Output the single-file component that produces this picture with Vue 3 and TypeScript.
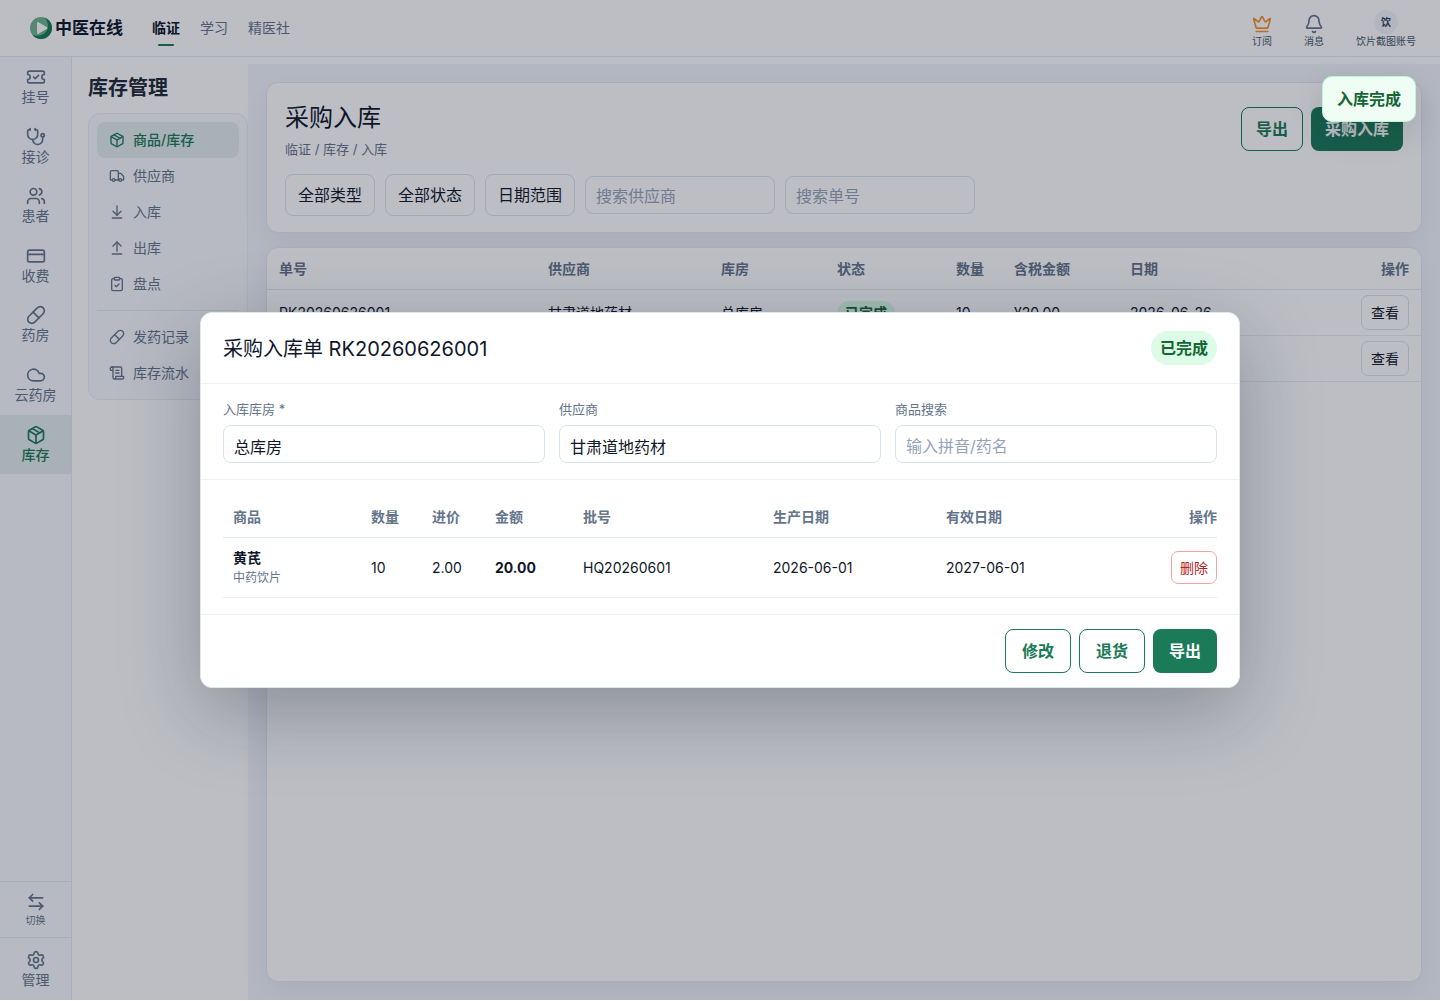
<script setup lang="ts">
import { ref } from 'vue'

type IconName = keyof typeof icons

const icons = {
  ticket: '<path d="M2 9a3 3 0 0 1 0 6v2a2 2 0 0 0 2 2h16a2 2 0 0 0 2-2v-2a3 3 0 0 1 0-6V7a2 2 0 0 0-2-2H4a2 2 0 0 0-2 2Z"/><path d="m9 12 2 2 4-4"/>',
  stethoscope: '<path d="M11 2v2"/><path d="M5 2v2"/><path d="M5 3H4a2 2 0 0 0-2 2v4a6 6 0 0 0 12 0V5a2 2 0 0 0-2-2h-1"/><path d="M8 15a6 6 0 0 0 12 0v-3"/><circle cx="20" cy="10" r="2"/>',
  users: '<path d="M16 21v-2a4 4 0 0 0-4-4H6a4 4 0 0 0-4 4v2"/><path d="M16 3.128a4 4 0 0 1 0 7.744"/><path d="M22 21v-2a4 4 0 0 0-3-3.87"/><circle cx="9" cy="7" r="4"/>',
  card: '<rect width="20" height="14" x="2" y="5" rx="2"/><path d="M2 10h20"/>',
  pill: '<path d="m10.5 20.5 10-10a4.95 4.95 0 1 0-7-7l-10 10a4.95 4.95 0 1 0 7 7Z"/><path d="m8.5 8.5 7 7"/>',
  cloud: '<path d="M17.5 19H9a7 7 0 1 1 6.71-9h1.79a4.5 4.5 0 1 1 0 9Z"/>',
  box: '<path d="M11 21.73a2 2 0 0 0 2 0l7-4A2 2 0 0 0 21 16V8a2 2 0 0 0-1-1.73l-7-4a2 2 0 0 0-2 0l-7 4A2 2 0 0 0 3 8v8a2 2 0 0 0 1 1.73z"/><path d="M12 22V12"/><path d="M3.29 7 12 12l8.71-5"/><path d="m7.5 4.27 9 5.15"/>',
  truck: '<path d="M14 18V6a2 2 0 0 0-2-2H4a2 2 0 0 0-2 2v11a1 1 0 0 0 1 1h2"/><path d="M15 18H9"/><path d="M19 18h2a1 1 0 0 0 1-1v-3.65a1 1 0 0 0-.22-.624l-3.48-4.35A1 1 0 0 0 17.52 8H14"/><circle cx="17" cy="18" r="2"/><circle cx="7" cy="18" r="2"/>',
  down: '<path d="M12 17V3"/><path d="m6 11 6 6 6-6"/><path d="M19 21H5"/>',
  up: '<path d="m18 9-6-6-6 6"/><path d="M12 3v14"/><path d="M5 21h14"/>',
  clipboard: '<rect width="8" height="4" x="8" y="2" rx="1"/><path d="M16 4h2a2 2 0 0 1 2 2v14a2 2 0 0 1-2 2H6a2 2 0 0 1-2-2V6a2 2 0 0 1 2-2h2"/><path d="m9 14 2 2 4-4"/>',
  scroll: '<path d="M15 12h-5"/><path d="M15 8h-5"/><path d="M19 17V5a2 2 0 0 0-2-2H4"/><path d="M8 21h12a2 2 0 0 0 2-2v-1a1 1 0 0 0-1-1H11a1 1 0 0 0-1 1v1a2 2 0 1 1-4 0V5a2 2 0 1 0-4 0v2a1 1 0 0 0 1 1h3"/>',
  swap: '<path d="M8 3 4 7l4 4"/><path d="M4 7h16"/><path d="m16 21 4-4-4-4"/><path d="M20 17H4"/>',
  gear: '<path d="M9.671 4.136a2.34 2.34 0 0 1 4.659 0 2.34 2.34 0 0 0 3.319 1.915 2.34 2.34 0 0 1 2.33 4.033 2.34 2.34 0 0 0 0 3.831 2.34 2.34 0 0 1-2.33 4.033 2.34 2.34 0 0 0-3.319 1.915 2.34 2.34 0 0 1-4.659 0 2.34 2.34 0 0 0-3.32-1.915 2.34 2.34 0 0 1-2.33-4.033 2.34 2.34 0 0 0 0-3.831A2.34 2.34 0 0 1 6.35 6.051a2.34 2.34 0 0 0 3.319-1.915"/><circle cx="12" cy="12" r="3"/>',
  crown: '<path d="M11.562 3.266a.5.5 0 0 1 .876 0L15.39 8.87a1 1 0 0 0 1.516.294L21.183 5.5a.5.5 0 0 1 .798.519l-2.834 10.246a1 1 0 0 1-.956.734H5.81a1 1 0 0 1-.957-.734L2.02 6.02a.5.5 0 0 1 .798-.519l4.276 3.664a1 1 0 0 0 1.516-.294z"/><path d="M5 21h14"/>',
  bell: '<path d="M10.268 21a2 2 0 0 0 3.464 0"/><path d="M3.262 15.326A1 1 0 0 0 4 17h16a1 1 0 0 0 .74-1.673C19.41 13.956 18 12.499 18 8A6 6 0 0 0 6 8c0 4.499-1.411 5.956-2.738 7.326"/>',
}

const topNav = ['临证', '学习', '精医社']

const railItems: { label: string; icon: IconName }[] = [
  { label: '挂号', icon: 'ticket' },
  { label: '接诊', icon: 'stethoscope' },
  { label: '患者', icon: 'users' },
  { label: '收费', icon: 'card' },
  { label: '药房', icon: 'pill' },
  { label: '云药房', icon: 'cloud' },
  { label: '库存', icon: 'box' },
]

const stockMenu: { label: string; icon: IconName }[] = [
  { label: '商品/库存', icon: 'box' },
  { label: '供应商', icon: 'truck' },
  { label: '入库', icon: 'down' },
  { label: '出库', icon: 'up' },
  { label: '盘点', icon: 'clipboard' },
]

const logMenu: { label: string; icon: IconName }[] = [
  { label: '发药记录', icon: 'pill' },
  { label: '库存流水', icon: 'scroll' },
]

const filters = ['全部类型', '全部状态', '日期范围']

interface Receipt {
  no?: string
  supplier?: string
  store?: string
  status?: string
  count?: number
  amount?: string
  date?: string
}

const receipts: Receipt[] = [
  { no: 'RK20260626001', supplier: '甘肃道地药材', store: '总库房', status: '已完成', count: 10, amount: '¥20.00', date: '2026-06-26' },
  {},
]

const supplierQuery = ref('')
const receiptQuery = ref('')
const store = ref('总库房')
const supplier = ref('甘肃道地药材')
const productQuery = ref('')
</script>

<template>
  <div class="app">
    <header class="topbar">
      <a class="brand" href="#">
        <svg class="logo" viewBox="0 0 22 22" aria-hidden="true">
          <circle cx="11" cy="11" r="11" fill="#6fb58c" />
          <path d="M15 .8A11 11 0 1 1 2.500 18C8 20 14 18 16.500 14 19 10 18 4.500 15 .8Z" fill="#1b7a57" />
          <path d="M7 6v10a1 1 0 0 0 1.500.8l8.500-5a1 1 0 0 0 0-1.600l-8.500-5A1 1 0 0 0 7 6Z" fill="#fff" />
        </svg>
        <span class="brand-name">中医在线</span>
      </a>
      <nav class="top-nav">
        <a v-for="(item, i) in topNav" :key="item" href="#" :class="{ current: i === 0 }">{{ item }}</a>
      </nav>
      <div class="tools">
        <button type="button" class="tool">
          <svg class="icon crown" viewBox="0 0 24 24" v-html="icons.crown" />
          <span>订阅</span>
        </button>
        <button type="button" class="tool">
          <svg class="icon" viewBox="0 0 24 24" v-html="icons.bell" />
          <span>消息</span>
        </button>
        <button type="button" class="tool">
          <span class="avatar">饮</span>
          <span>饮片截图账号</span>
        </button>
      </div>
    </header>

    <div class="body">
      <aside class="rail">
        <nav>
          <a v-for="item in railItems" :key="item.label" href="#" class="rail-item" :class="{ current: item.label === '库存' }">
            <svg class="icon" viewBox="0 0 24 24" v-html="icons[item.icon]" />
            <span>{{ item.label }}</span>
          </a>
        </nav>
        <div class="rail-foot">
          <button type="button" class="rail-switch">
            <svg class="icon" viewBox="0 0 24 24" v-html="icons.swap" />
            <span>切换</span>
          </button>
          <div class="rail-manage">
            <a href="#" class="rail-item">
              <svg class="icon" viewBox="0 0 24 24" v-html="icons.gear" />
              <span>管理</span>
            </a>
          </div>
        </div>
      </aside>

      <aside class="submenu">
        <h2>库存管理</h2>
        <nav class="menu-box">
          <a v-for="(item, i) in stockMenu" :key="item.label" href="#" class="menu-item" :class="{ current: i === 0 }">
            <svg class="icon small" viewBox="0 0 24 24" v-html="icons[item.icon]" />
            <span>{{ item.label }}</span>
          </a>
          <hr />
          <a v-for="item in logMenu" :key="item.label" href="#" class="menu-item">
            <svg class="icon small" viewBox="0 0 24 24" v-html="icons[item.icon]" />
            <span>{{ item.label }}</span>
          </a>
        </nav>
      </aside>

      <main class="content">
        <section class="card page-head">
          <div class="head-row">
            <div>
              <h1>采购入库</h1>
              <p class="crumbs">临证 / 库存 / 入库</p>
            </div>
            <div class="actions">
              <button type="button" class="btn compact outline">导出</button>
              <button type="button" class="btn compact primary">采购入库</button>
            </div>
          </div>
          <div class="filters">
            <button v-for="f in filters" :key="f" type="button" class="filter">{{ f }}</button>
            <input v-model="supplierQuery" class="field" type="text" placeholder="搜索供应商" aria-label="搜索供应商" />
            <input v-model="receiptQuery" class="field" type="text" placeholder="搜索单号" aria-label="搜索单号" />
          </div>
        </section>

        <section class="card list">
          <table class="receipts">
            <colgroup>
              <col class="r-no" /><col class="r-supplier" /><col class="r-store" /><col class="r-status" />
              <col class="r-count" /><col class="r-amount" /><col />
              <col class="r-op" />
            </colgroup>
            <thead>
              <tr>
                <th>单号</th><th>供应商</th><th>库房</th><th>状态</th><th>数量</th><th>含税金额</th><th>日期</th><th class="end">操作</th>
              </tr>
            </thead>
            <tbody>
              <tr v-for="(r, i) in receipts" :key="i">
                <td>{{ r.no }}</td>
                <td>{{ r.supplier }}</td>
                <td>{{ r.store }}</td>
                <td><span v-if="r.status" class="tag">{{ r.status }}</span></td>
                <td>{{ r.count }}</td>
                <td>{{ r.amount }}</td>
                <td>{{ r.date }}</td>
                <td class="end"><button type="button" class="mini">查看</button></td>
              </tr>
            </tbody>
          </table>
        </section>
      </main>
    </div>

    <div class="overlay">
      <section class="modal" role="dialog" aria-modal="true" aria-labelledby="modal-title">
        <header class="modal-head">
          <h2 id="modal-title">采购入库单 RK20260626001</h2>
          <span class="status">已完成</span>
        </header>
        <form class="modal-form" @submit.prevent>
          <label>
            <span>入库库房 *</span>
            <input v-model="store" class="field" type="text" />
          </label>
          <label>
            <span>供应商</span>
            <input v-model="supplier" class="field" type="text" />
          </label>
          <label>
            <span>商品搜索</span>
            <input v-model="productQuery" class="field" type="text" placeholder="输入拼音/药名" />
          </label>
        </form>
        <div class="modal-body">
          <table class="lines">
            <colgroup>
              <col class="l-item" /><col class="l-count" /><col class="l-price" /><col class="l-amount" />
              <col class="l-batch" /><col class="l-made" /><col />
              <col class="l-op" />
            </colgroup>
            <thead>
              <tr>
                <th>商品</th><th>数量</th><th>进价</th><th>金额</th><th>批号</th><th>生产日期</th><th>有效日期</th><th class="end">操作</th>
              </tr>
            </thead>
            <tbody>
              <tr>
                <td><strong>黄芪</strong><small>中药饮片</small></td>
                <td>10</td>
                <td>2.00</td>
                <td><b>20.00</b></td>
                <td>HQ20260601</td>
                <td>2026-06-01</td>
                <td>2027-06-01</td>
                <td class="end"><button type="button" class="mini danger">删除</button></td>
              </tr>
            </tbody>
          </table>
        </div>
        <footer class="modal-foot">
          <button type="button" class="btn outline">修改</button>
          <button type="button" class="btn outline">退货</button>
          <button type="button" class="btn primary">导出</button>
        </footer>
      </section>
    </div>

    <div class="toast" role="status">入库完成</div>
  </div>
</template>

<style>
body {
  background: #fff;
}
</style>

<style scoped>
.app,
.app * {
  box-sizing: border-box;
}

.app {
  position: relative;
  display: flex;
  flex-direction: column;
  min-height: calc(100vh - 1px);
  font-family: Inter, "Noto Sans CJK SC", sans-serif;
  font-size: 14px;
  line-height: 1.4;
  color: #0f172a;
}

h1,
h2,
p {
  margin: 0;
}

a {
  color: inherit;
  text-decoration: none;
}

button,
input {
  font: inherit;
  color: inherit;
}

button {
  cursor: pointer;
}

.icon {
  display: block;
  width: 20px;
  height: 20px;
  flex: none;
  fill: none;
  stroke: currentColor;
  stroke-width: 2;
  stroke-linecap: round;
  stroke-linejoin: round;
}

.icon.small {
  width: 16px;
  height: 16px;
}

/* Top bar */
.topbar {
  display: flex;
  align-items: center;
  height: 57px;
  padding: 0 24px 0 30px;
  border-bottom: 1px solid #e2e8f0;
  background: #fff;
}

.brand {
  display: flex;
  align-items: center;
  gap: 3px;
  font-size: 17px;
  font-weight: 600;
}

.brand-name {
  padding-top: 2px;
}

.logo {
  width: 22px;
  height: 22px;
}

.top-nav {
  display: flex;
  gap: 20px;
  margin-left: 29px;
  color: #64748b;
}

.top-nav a {
  position: relative;
  line-height: 36px;
}

.top-nav .current {
  font-weight: 700;
  color: #0f172a;
}

.top-nav .current::after {
  content: "";
  position: absolute;
  left: 6px;
  right: 6px;
  bottom: 0;
  height: 2px;
  border-radius: 1px;
  background: #1b7a57;
}

.tools {
  display: flex;
  align-items: flex-end;
  gap: 32px;
  margin-left: auto;
  padding-top: 2px;
}

.tool {
  display: flex;
  flex-direction: column;
  align-items: center;
  padding: 0;
  border: 0;
  background: none;
  font-size: 10px;
  line-height: 14px;
  color: #475569;
}

.tool .icon {
  color: #64748b;
}

.tool .crown {
  color: #f59331;
}

.avatar {
  width: 24px;
  height: 24px;
  border-radius: 50%;
  background: #f1f5f9;
  font-weight: 600;
  line-height: 24px;
  text-align: center;
  color: #334155;
}

/* Left rail */
.body {
  display: flex;
  flex: 1;
}

.rail {
  display: flex;
  flex-direction: column;
  justify-content: space-between;
  width: 72px;
  border-right: 1px solid #e2e8f0;
  background: #f8fafc;
  color: #64748b;
}

.rail-item {
  display: flex;
  flex-direction: column;
  align-items: center;
  padding: 10px 0;
}

.rail-item.current {
  background: #e3edec;
  font-weight: 500;
  color: #1b7a57;
}

.rail-switch {
  display: flex;
  flex-direction: column;
  align-items: center;
  gap: 1px;
  width: 100%;
  height: 56px;
  padding: 10px 0;
  border: 0;
  border-top: 1px solid #e2e8f0;
  background: none;
  font-size: 10px;
}

.rail-manage {
  padding-top: 2px;
  border-top: 1px solid #e2e8f0;
}

/* Stock submenu */
.submenu {
  width: 176px;
  padding: 16px 0 0 16px;
  background: #fff;
}

.submenu h2 {
  font-size: 20px;
  font-weight: 700;
  line-height: 30px;
  color: #1f2937;
}

.menu-box {
  margin-top: 10px;
  padding: 8px;
  border: 1px solid #e9eef4;
  border-radius: 12px;
  background: #f8fafc;
  color: #64748b;
}

.menu-box hr {
  height: 1px;
  margin: 8px 0;
  border: 0;
  background: #e2e8f0;
}

.menu-item {
  display: flex;
  align-items: center;
  gap: 8px;
  height: 36px;
  padding: 0 12px;
  border-radius: 8px;
}

.menu-item.current {
  background: #e3edec;
  font-weight: 500;
  color: #1b7a57;
}

/* Main area */
.content {
  display: flex;
  flex: 1;
  flex-direction: column;
  gap: 14px;
  min-width: 0;
  margin-top: 7px;
  padding: 18px;
  background: #f4f6fc;
}

.card {
  border: 1px solid #e2e8f0;
  border-radius: 12px;
  background: #fff;
  box-shadow: 0 10px 30px rgba(15, 23, 42, 0.06);
}

.page-head {
  padding: 18px 18px 16px;
}

.head-row {
  display: flex;
  align-items: center;
  justify-content: space-between;
}

h1 {
  font-size: 24px;
  font-weight: 400;
}

.crumbs {
  margin-top: 5px;
  font-size: 13px;
  color: #64748b;
}

.actions {
  display: flex;
  gap: 8px;
}

.btn {
  height: 44px;
  padding: 0 16px;
  border: 0;
  border-radius: 8px;
  font-size: 16px;
  font-weight: 600;
}

.btn.compact {
  padding: 0 14px;
}

.btn.outline {
  border: 1px solid #1b7a57;
  background: #fff;
  color: #1b7a57;
}

.btn.primary {
  background: #1b7a57;
  color: #fff;
}

.filters {
  display: flex;
  align-items: center;
  gap: 10px;
  margin-top: 16px;
}

.filter {
  height: 42px;
  padding: 0 12px;
  border: 1px solid #dbe2ea;
  border-radius: 8px;
  background: #fff;
  font-size: 16px;
}

.field {
  width: 190px;
  height: 38px;
  padding: 3px 10px 0;
  border: 1px solid #dbe2ea;
  border-radius: 8px;
  background: #fff;
  font-size: 16px;
  outline: none;
}

.field::placeholder {
  color: #94a3b8;
  opacity: 1;
}

.list {
  flex: 1;
}

table {
  width: 100%;
  border-spacing: 0;
  table-layout: fixed;
}

th {
  border-bottom: 1px solid #e2e8f0;
  font-weight: 600;
  text-align: left;
  color: #64748b;
}

td {
  border-bottom: 1px solid #e9eef4;
}

.end {
  text-align: right;
}

.receipts th,
.receipts td {
  height: 46px;
  padding: 2px 12px 0;
}

.receipts th {
  height: 42px;
}

.receipts .mini {
  margin-bottom: 2px;
}

.r-no { width: 269px; }
.r-supplier { width: 173px; }
.r-store { width: 116px; }
.r-status { width: 119px; }
.r-count { width: 58px; }
.r-amount { width: 116px; }
.r-op { width: 96px; }

.tag {
  display: inline-block;
  padding: 2px 8px;
  border-radius: 12px;
  background: #dcfce7;
  font-weight: 600;
  color: #166534;
}

.mini {
  height: 35px;
  padding: 1px 9px 0;
  border: 1px solid #dbe2ea;
  border-radius: 7px;
  background: #fff;
  font-size: 14px;
}

.mini.danger {
  height: 33px;
  padding: 0 8px;
  border-color: #f4a3a3;
  color: #b42318;
}

/* Receipt dialog */
.overlay {
  position: absolute;
  inset: 0;
  display: flex;
  align-items: center;
  justify-content: center;
  padding: 24px;
  background: rgba(15, 23, 42, 0.28);
}

.modal {
  width: 100%;
  max-width: 1040px;
  border: 1px solid #e2e8f0;
  border-radius: 12px;
  background: #fff;
  box-shadow: 0 24px 80px rgba(15, 23, 42, 0.28);
}

.modal-head {
  display: flex;
  align-items: center;
  justify-content: space-between;
  padding: 18px 22px;
  border-bottom: 1px solid #eef1f5;
}

.modal-head h2 {
  padding-top: 2px;
  font-size: 20px;
  font-weight: 400;
}

.status {
  padding: 0 9px;
  border-radius: 17px;
  background: #dcfce7;
  font-size: 16px;
  font-weight: 600;
  line-height: 34px;
  color: #166534;
}

.modal-form {
  display: grid;
  grid-template-columns: repeat(3, 1fr);
  gap: 14px;
  padding: 16px 22px;
  border-bottom: 1px solid #eef1f5;
}

.modal-form label {
  display: flex;
  flex-direction: column;
  gap: 7px;
  font-size: 13px;
  line-height: 18px;
  color: #64748b;
}

.modal-form .field {
  width: 100%;
  color: #0f172a;
}

.modal-body {
  padding: 16px 22px;
}

.lines th,
.lines td {
  height: 60px;
  padding: 0 0 0 10px;
}

.lines th {
  height: 42px;
}

.l-item { width: 138px; }
.l-count { width: 61px; }
.l-price { width: 63px; }
.l-amount { width: 88px; }
.l-batch { width: 190px; }
.l-made { width: 173px; }
.l-op { width: 96px; }

.lines b {
  font-weight: 700;
}

.lines strong,
.lines small {
  display: block;
}

.lines small {
  margin-top: 2px;
  font-size: 12px;
  color: #64748b;
}

.modal-foot {
  display: flex;
  justify-content: flex-end;
  gap: 8px;
  padding: 14px 22px;
  border-top: 1px solid #eef1f5;
}

.toast {
  position: absolute;
  top: 76px;
  right: 24px;
  padding: 0 14px;
  border: 1px solid #bbf7d0;
  border-radius: 10px;
  background: #f0fdf4;
  box-shadow: 0 12px 32px rgba(15, 23, 42, 0.14);
  font-size: 16px;
  font-weight: 600;
  line-height: 44px;
  color: #166534;
}
</style>
